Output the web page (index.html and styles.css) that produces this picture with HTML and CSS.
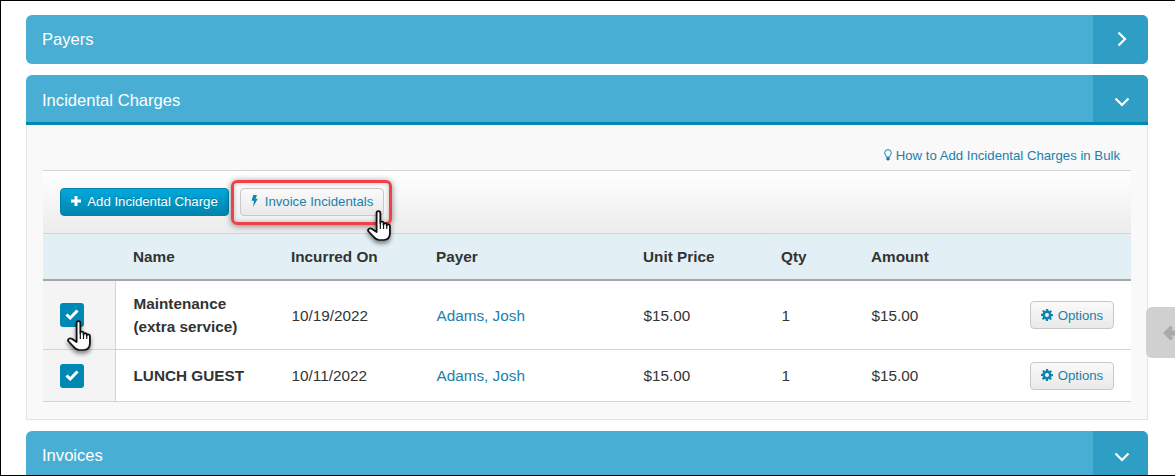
FILE: index.html
```html
<!DOCTYPE html>
<html lang="en">
<head>
<meta charset="utf-8">
<title>Incidental Charges</title>
<link rel="stylesheet" href="styles.css">
</head>
<body>
<svg class="defs" width="0" height="0" aria-hidden="true">
  <symbol id="hand" viewBox="0.5 0 22.5 31" preserveAspectRatio="none">
    <path d="M9.500 3C9.500 .6 13 .6 13 3V13C13 11 16 11 16 13V14.500C16 12.600 19 12.600 19 14.500V15.500C19 13.800 22 13.800 22 16V23C22 27.500 20 30 16 30H12C9.500 30 7.500 28 6 26L2 21.500C.5 19.500 3 17.500 5 18.800L9.500 22Z" fill="#fff" stroke="#111" stroke-width="1.700" stroke-linejoin="round"/>
    <path d="M13 13V19M16 14V19M19 15V19" fill="none" stroke="#111" stroke-width="1.100"/>
  </symbol>
  <symbol id="gear" viewBox="0 0 12 12">
    <path fill-rule="evenodd" d="M4.900 0H7.100L7.400 1.600L8.500 2.100L9.900 1.200L11 2.800L9.800 3.900L10.100 4.900L12 5V7.100L10.300 7.400L9.900 8.500L10.900 9.900L9.400 11.100L8.200 10L7.100 10.300L7 12H4.900L4.600 10.300L3.500 9.900L2.100 10.900L.9 9.400L2 8.200L1.700 7.100L0 7V4.900L1.700 4.600L2.100 3.500L1.100 2.100L2.600 .9L3.800 2L4.900 1.700ZM6 4A2 2 0 1 0 6 8A2 2 0 1 0 6 4Z"/>
  </symbol>
  <symbol id="check" viewBox="0 0 14 12">
    <path d="M1.500 6.500L5.200 10L12.500 2.500" fill="none" stroke="#fff" stroke-width="3"/>
  </symbol>
  <symbol id="down" viewBox="0 0 16 10">
    <path d="M1.500 1.500L8 8L14.500 1.500" fill="none" stroke="#fff" stroke-width="2.200"/>
  </symbol>
</svg>
<div class="frame">
  <section class="panel">
    <header class="panel-head panel-head-closed">
      <h2 class="panel-title">Payers</h2>
      <span class="panel-toggle"><svg class="icon-right" viewBox="0 0 10 16"><path d="M1.500 1.500L8 8L1.500 14.500" fill="none" stroke="#fff" stroke-width="2.200"/></svg></span>
    </header>
  </section>

  <section class="panel">
    <header class="panel-head panel-head-open">
      <h2 class="panel-title">Incidental Charges</h2>
      <span class="panel-toggle"><svg class="icon-down"><use href="#down"/></svg></span>
    </header>
    <div class="panel-body">
      <p class="help">
        <svg class="icon-bulb" viewBox="0 0 8 12"><path d="M4 .6A3.300 3.300 0 0 0 .7 3.900C.7 5.600 2.200 6.400 2.400 8H5.600C5.800 6.400 7.300 5.600 7.300 3.900A3.300 3.300 0 0 0 4 .6Z" fill="#fff" stroke="#0e84b0" stroke-width="1"/><path d="M2.500 8.500H5.500V10.500L4.500 11.500H3.500L2.500 10.500Z" fill="#0e6f95"/></svg>
        <a class="link" href="#">How to Add Incidental Charges in Bulk</a>
      </p>
      <div class="toolbar">
        <button class="btn btn-primary" type="button">
          <svg class="icon-plus" viewBox="0 0 10 10"><path d="M3.500 0H6.500V3.500H10V6.500H6.500V10H3.500V6.500H0V3.500H3.500Z" fill="#fff"/></svg>
          Add Incidental Charge
        </button>
        <button class="btn btn-default btn-invoice" type="button">
          <svg class="icon-bolt" viewBox="0 0 7 12"><path d="M2.300 0H6L4.500 3.800H6.800L2 12L3 5.800H.5Z" fill="#0e84b0"/></svg>
          Invoice Incidentals
        </button>
      </div>
      <table class="charges">
        <thead>
          <tr>
            <th class="col-check"></th>
            <th class="col-name">Name</th>
            <th class="col-date">Incurred On</th>
            <th class="col-payer">Payer</th>
            <th class="col-price">Unit Price</th>
            <th class="col-qty">Qty</th>
            <th class="col-amount">Amount</th>
            <th class="col-options"></th>
          </tr>
        </thead>
        <tbody>
          <tr class="row-tall">
            <td class="cell-check"><span class="checkbox"><svg class="icon-check"><use href="#check"/></svg></span></td>
            <td class="cell-name">Maintenance<br>(extra service)</td>
            <td>10/19/2022</td>
            <td><a class="link" href="#">Adams, Josh</a></td>
            <td>$15.00</td>
            <td>1</td>
            <td>$15.00</td>
            <td class="cell-options"><button class="btn btn-default btn-options" type="button"><svg class="icon-gear"><use href="#gear"/></svg> Options</button></td>
          </tr>
          <tr class="row-short">
            <td class="cell-check"><span class="checkbox"><svg class="icon-check"><use href="#check"/></svg></span></td>
            <td class="cell-name">LUNCH GUEST</td>
            <td>10/11/2022</td>
            <td><a class="link" href="#">Adams, Josh</a></td>
            <td>$15.00</td>
            <td>1</td>
            <td>$15.00</td>
            <td class="cell-options"><button class="btn btn-default btn-options" type="button"><svg class="icon-gear"><use href="#gear"/></svg> Options</button></td>
          </tr>
        </tbody>
      </table>
    </div>
  </section>

  <section class="panel">
    <header class="panel-head panel-head-closed">
      <h2 class="panel-title">Invoices</h2>
      <span class="panel-toggle"><svg class="icon-down"><use href="#down"/></svg></span>
    </header>
  </section>

  <div class="highlight"></div>
  <svg class="hand hand-toolbar"><use href="#hand"/></svg>
  <svg class="hand hand-check"><use href="#hand"/></svg>
  <div class="side-tab"><svg class="icon-side" viewBox="0 0 16 16"><path d="M7.500 .5L0 8L7.500 15.500L10 13L8 10.500H16V5.500H8L10 3Z" fill="#aaa"/></svg></div>
</div>
</body>
</html>
```
FILE: styles.css
```css
* { box-sizing: border-box; }
html, body { margin: 0; padding: 0; background: #fff; }
body { font-family: "Liberation Sans", Arial, sans-serif; font-size: 15.3px; color: #333; }
.defs { position: absolute; }

.frame {
  position: relative;
  width: 1175px;
  height: 476px;
  overflow: hidden;
  padding: 14px 0 0 25px;
  border-top: 1px solid #000;
  border-left: 1px solid #000;
  border-bottom: 1px solid #000;
}

.panel { width: 1122px; margin-bottom: 11px; }

.panel-head {
  display: flex;
  justify-content: space-between;
  align-items: stretch;
  background: #48aed3;
  border-radius: 6px 6px 0 0;
  height: 49px;
}
.panel-head-closed { border-radius: 6px; }
.panel-head-open { height: 50px; border-bottom: 3px solid #0088b0; }
.panel-title {
  margin: 0;
  padding-left: 16px;
  font-size: 16.6px;
  font-weight: 400;
  line-height: 49px;
  color: #fff;
}
.panel-head-open .panel-title { line-height: 51px; }
.panel-toggle {
  width: 55px;
  display: flex;
  align-items: center;
  justify-content: center;
  padding-left: 3px;
  background: #2f9ec5;
  border-radius: 0 6px 0 0;
}
.panel-head-open .panel-toggle { padding-top: 6px; }
.panel-head-closed .panel-toggle { border-radius: 0 6px 6px 0; }
.icon-right { width: 10px; height: 16px; margin-bottom: 2px; }
.icon-down { width: 16px; height: 10px; }
.panel-head-closed .icon-down { margin-top: 2px; }

.panel-body {
  height: 295px;
  padding: 0 16px;
  background: #f9f9f9;
  border: 1px solid #e3e3e3;
  border-top: 0;
}

.help {
  display: flex;
  justify-content: flex-end;
  align-items: center;
  gap: 4px;
  height: 45px;
  margin: 0;
  padding: 15px 11px 0 0;
  font-size: 13.2px;
}
.icon-bulb { width: 8px; height: 12px; margin-top: -1px; }
.link { color: #1a80ac; text-decoration: none; }

.toolbar {
  display: flex;
  align-items: center;
  gap: 11px;
  height: 64px;
  padding: 0 17px;
  background: linear-gradient(#fff, #ececec);
  border-top: 1px solid #d4d4d4;
  border-bottom: 1px solid #d4d4d4;
}

.btn {
  display: inline-flex;
  align-items: center;
  justify-content: center;
  height: 28px;
  padding: 0;
  border-radius: 4px;
  font-family: inherit;
  font-size: 13.2px;
}
.toolbar .btn { padding-bottom: 2px; }
.btn-primary {
  width: 169px;
  gap: 6px;
  border: 1px solid #0082aa;
  background: linear-gradient(#00a9dc, #0084ad);
  color: #fff;
  text-shadow: 0 -1px 0 rgba(0,0,0,.2);
  font-weight: 400;
}
.btn-default {
  border: 1px solid #c8c8c8;
  background: linear-gradient(#fafafa, #e9e9e9);
  color: #1a80ac;
}
.btn-invoice { width: 144px; gap: 7px; }
.btn-options { width: 84px; gap: 5px; }

.icon-plus { width: 10px; height: 10px; margin-top: -1px; }
.icon-bolt { width: 7px; height: 12px; margin-top: -1px; }
.icon-gear { width: 12px; height: 12px; fill: #0e84b0; margin-top: -1px; }

.charges {
  width: 1088px;
  border-collapse: separate;
  border-spacing: 0;
  table-layout: fixed;
  background: #fff;
  font-size: 15.3px;
}
.charges th, .charges td { padding: 0 0 0 17px; text-align: left; }
.charges td { padding-left: 17.5px; }
.charges th {
  height: 47px;
  background: #e2f0f5;
  border-bottom: 2px solid #a6a6a6;
  font-weight: 700;
}
.charges td { border-bottom: 1px solid #d4d4d4; }
.col-check { width: 73px; }
.col-name { width: 158px; }
.col-date { width: 145px; }
.col-payer { width: 207px; }
.col-price { width: 138px; }
.col-qty { width: 90px; }
.col-amount { width: 159px; }
.col-options { width: 118px; }
.row-tall td { height: 69px; padding-top: 2px; }
.row-short td { height: 52px; }
.charges .cell-check {
  padding: 0 0 0 17px;
  background: #f4f4f4;
  border-right: 1px solid #d4d4d4;
}
.charges .cell-name { padding-top: 0; font-weight: 700; line-height: 23px; }
.charges .cell-options { padding: 0 17px 0 0; text-align: right; }

.checkbox {
  display: flex;
  align-items: center;
  justify-content: center;
  width: 24px;
  height: 24px;
  border-radius: 3px;
  background: #0088b5;
}
.icon-check { width: 14px; height: 12px; margin-top: -2px; }

.highlight {
  position: absolute;
  left: 230px;
  top: 179px;
  width: 161px;
  height: 45px;
  border: 3px solid #f2404a;
  border-radius: 6px;
  box-shadow: 0 1px 6px rgba(0,0,0,.45), inset 0 0 4px rgba(0,0,0,.25);
}
.hand {
  position: absolute;
  width: 24px;
  height: 31px;
  filter: drop-shadow(0 3px 2px rgba(0,0,0,.45));
}
.hand-toolbar { left: 366px; top: 209px; }
.hand-check { left: 66px; top: 319px; }

.side-tab {
  position: absolute;
  left: 1145px;
  top: 306px;
  width: 29px;
  height: 51px;
  display: flex;
  align-items: center;
  padding-left: 17px;
  overflow: hidden;
  background: #d0d0d0;
  border-radius: 6px 0 0 6px;
}
.icon-side { flex: none; width: 16px; height: 16px; }
```
